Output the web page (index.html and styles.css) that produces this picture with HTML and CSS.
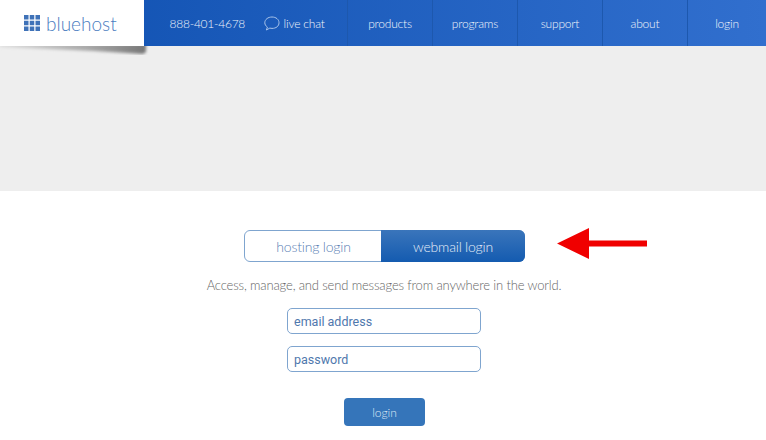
FILE: index.html
```html
<!DOCTYPE html>
<html lang="en">
<head>
    <meta charset="UTF-8">
    <title>Webmail Login</title>
    <link rel="stylesheet" href="styles.css">
</head>
<body>
<header class="topbar">
    <a class="logo">
        <svg class="logo-grid" width="16" height="16" viewBox="0 0 16 16">
            <path fill="#3f72b8" d="M0 0h4.500v4.500H0zM5.750 0h4.500v4.500h-4.500zM11.500 0H16v4.500h-4.500zM0 5.750h4.500v4.500H0zM5.750 5.750h4.500v4.500h-4.500zM11.500 5.750H16v4.500h-4.500zM0 11.500h4.500V16H0zM5.750 11.500h4.500V16h-4.500zM11.500 11.500H16V16h-4.500z"/>
        </svg>
        <span class="logo-text">bluehost</span>
        <svg class="logo-shadow" width="152" height="14" viewBox="0 0 152 14">
            <defs>
                <linearGradient id="shade">
                    <stop offset="0" stop-color="#ddd"/>
                    <stop offset="0.6" stop-color="#a8a8a8"/>
                    <stop offset="1" stop-color="#777"/>
                </linearGradient>
                <filter id="soft">
                    <feGaussianBlur stdDeviation="1.500"/>
                </filter>
            </defs>
            <path fill="url(#shade)" filter="url(#soft)" d="M0-2h146v8l-3 2-50-3L0 1z"/>
        </svg>
    </a>
    <div class="contact">
        <span class="phone">888-401-4678</span>
        <span class="chat">
            <svg width="16" height="15" viewBox="0 0 16 15">
                <path fill="none" stroke="#a9c4ea" stroke-width="1" d="M8 1c4 0 7 2.400 7 5.800s-3 5.600-7 5.600c-.8 0-1.500-.1-2.200-.3L2.400 14l1-2.900C1.800 10 .8 8.500.8 6.800.8 3.400 4 1 8 1z"/>
            </svg>
            live chat
        </span>
    </div>
    <nav class="menu">
        <a>products</a>
        <a>programs</a>
        <a>support</a>
        <a>about</a>
        <a>login</a>
    </nav>
</header>

<div class="band"></div>

<main class="login">
    <div class="tabs">
        <a class="tab">hosting login</a>
        <a class="tab active">webmail login</a>
        <svg class="arrow" width="90" height="32" viewBox="0 0 90 32">
            <path fill="#f00000" d="M0 15.500L32 0v12.500h58v6H32V31z"/>
        </svg>
    </div>
    <p class="intro">Access, manage, and send messages from anywhere in the world.</p>
    <input class="field" type="text" placeholder="email address">
    <input class="field" type="text" placeholder="password">
    <button class="submit">login</button>
</main>
</body>
</html>
```

FILE: styles.css
```css
body {
    margin: 0;
    background-color: #fff;
    font-family: Lato, "Liberation Sans", sans-serif;
    font-weight: 300;
    overflow: hidden;
}

.topbar {
    display: flex;
    height: 46px;
    background: linear-gradient(to right, #0f50b0, #316fce);
    color: #f0f4fb;
    font-size: 12px;
    letter-spacing: -0.2px;
}

.logo {
    position: relative;
    display: flex;
    align-items: center;
    width: 144px;
    padding-left: 24px;
    box-sizing: border-box;
    background-color: #fff;
}

.logo-shadow {
    position: absolute;
    top: 46px;
    left: 0;
}

.logo-grid {
    margin-right: 6px;
}

.logo-text {
    color: #4b7dbf;
    font-size: 19px;
    letter-spacing: 0;
}

.contact {
    display: flex;
    align-items: center;
    width: 204px;
    padding-left: 26px;
    box-sizing: border-box;
}

.phone {
    width: 94px;
    font-size: 12px;
    letter-spacing: -0.25px;
}

.chat {
    display: flex;
    align-items: center;
    gap: 4px;
}

.menu {
    display: flex;
    flex: 1;
}

.menu a {
    display: flex;
    align-items: center;
    justify-content: center;
    width: 85px;
    border-left: 1px solid #1d58ae;
    box-sizing: border-box;
}

.menu a:last-child {
    width: 79px;
}

.band {
    height: 145px;
    background-color: #eee;
}

.login {
    display: flex;
    flex-direction: column;
    align-items: center;
    padding: 39px 0 0 2px;
}

.tabs {
    position: relative;
    display: flex;
    width: 281px;
    height: 32px;
    margin-left: 1px;
    box-sizing: border-box;
    border: 1px solid #7fa5cf;
    border-radius: 6px;
}

.tab {
    display: flex;
    align-items: center;
    justify-content: center;
    width: 137px;
    color: #5a80b4;
    font-size: 14px;
    letter-spacing: -0.2px;
}

.tab.active {
    flex: 1;
    margin: -1px;
    border-radius: 0 6px 6px 0;
    background: linear-gradient(to bottom, #3a75bb, #145bb0);
    color: #e6eef8;
}

.arrow {
    position: absolute;
    top: -3px;
    left: 312px;
}

.intro {
    margin: 14px 0;
    color: #666;
    font-size: 13px;
    letter-spacing: -0.15px;
    line-height: 18px;
}

.field {
    width: 194px;
    height: 26px;
    margin-bottom: 12px;
    padding: 0 6px;
    box-sizing: border-box;
    border: 1px solid #7fa5cf;
    border-radius: 5px;
    font-family: Roboto, sans-serif;
    font-size: 12.500px;
    outline: none;
}

.field::placeholder {
    color: #4f78ad;
    opacity: 1;
}

.submit {
    width: 81px;
    height: 28px;
    margin: 14px 0 0 1px;
    border: none;
    border-radius: 4px;
    background-color: #3575ba;
    color: #dfe9f5;
    font-family: Lato, sans-serif;
    font-weight: 300;
    font-size: 12px;
}
```
